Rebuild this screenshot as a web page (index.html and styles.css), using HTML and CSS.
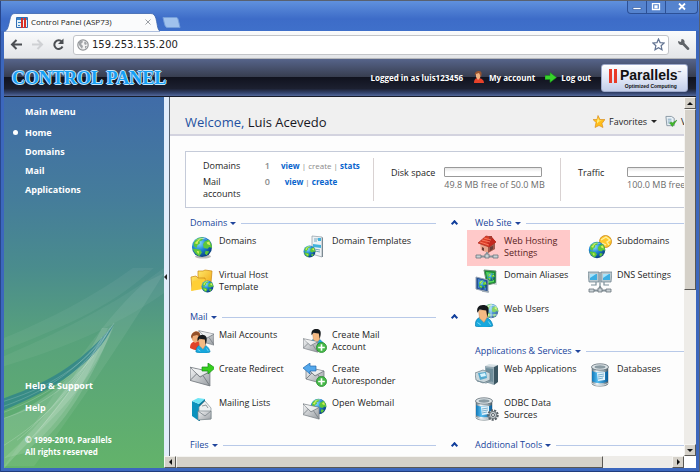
FILE: index.html
```html
<!DOCTYPE html>
<html lang="en">
<head>
<meta charset="utf-8">
<title>Control Panel (ASP73)</title>
<link rel="stylesheet" href="styles.css">
</head>
<body>
<svg class="sprite" aria-hidden="true">
  <defs>
    <radialGradient id="g-sea" cx=".35" cy=".3" r=".8"><stop offset="0" stop-color="#8fe0ff"/><stop offset=".45" stop-color="#1c86d6"/><stop offset="1" stop-color="#06306e"/></radialGradient>
    <linearGradient id="g-env" x1="0" y1="0" x2="1" y2="1"><stop offset="0" stop-color="#f4f5f6"/><stop offset="1" stop-color="#989da2"/></linearGradient>
    <linearGradient id="g-fold" x1="0" y1="0" x2="1" y2="1"><stop offset="0" stop-color="#ffe96a"/><stop offset="1" stop-color="#f0a412"/></linearGradient>
    <linearGradient id="g-can" x1="0" x2="1"><stop offset="0" stop-color="#61757f"/><stop offset=".3" stop-color="#f4f8fa"/><stop offset=".7" stop-color="#a9bac2"/><stop offset="1" stop-color="#45565f"/></linearGradient>
    <linearGradient id="g-blue" x1="0" x2="1"><stop offset="0" stop-color="#1077b8"/><stop offset=".35" stop-color="#56bdf0"/><stop offset="1" stop-color="#0a5e9c"/></linearGradient>
    <symbol id="globe" viewBox="0 0 24 24">
      <circle cx="12" cy="12" r="11" fill="url(#g-sea)"/>
      <path d="M3 7C6 2 11 1 14 2l-2 3-3 1 1 2-3 2-1 3-3-2zM15 6l4-2c3 3 4 6 4 9l-3-1-2 2-4-1-1-4zM5 14l5 1 2 3-3 4C5 20 3 17 2 14zM16 16l4 1-3 4-2-2z" fill="#5dc63a"/>
      <path d="M4 8l4-4 3-1-3 3-1 3zM17 7l3-1 1 4-3-1zM6 16l3 1-1 3z" fill="#d5ee5c"/>
      <path d="M5 5c3-3 9-4 13-1-4-1-9-1-13 1z" fill="#fff" opacity=".55"/>
    </symbol>
    <symbol id="env" viewBox="0 0 20 20">
      <path d="M1 2l18 4v13L1 14z" fill="url(#g-env)" stroke="#777d83" stroke-width=".8"/>
      <path d="M1 2l9 9 9-5M1 14l6-6M19 19l-6-9" fill="none" stroke="#777d83" stroke-width=".9"/>
      <path d="M2 3l8 7 8-4z" fill="#f8f9fa" opacity=".7"/>
    </symbol>
    <symbol id="plus" viewBox="0 0 10 10">
      <circle cx="5" cy="5" r="4.6" fill="#46b948" stroke="#23892b" stroke-width=".7"/><path d="M5 2v6M2 5h6" stroke="#fff" stroke-width="1.5"/>
    </symbol>
    <symbol id="man" viewBox="0 0 18 20">
      <path d="M1 19c0-5 2-8 7-8s8 3 9 8c-4 2-12 2-16 0z" fill="#18a8dd" stroke="#0879aa" stroke-width=".6"/>
      <path d="M4 5l1 7 4 4 3-5V4z" fill="#f5ba83" stroke="#b9794a" stroke-width=".4"/>
      <path d="M3 7C2 3 4 0 8 0s6 2 5 7l-1 4-1-6-6-1z" fill="#15191c"/>
      <path d="M3 16l3 2M13 15l2 3" stroke="#8fe2fa" stroke-width=".8"/>
    </symbol>
    <symbol id="can" viewBox="0 0 20 24">
      <path d="M2 4v17c2 3 14 3 16 0V4z" fill="url(#g-can)" stroke="#59666d" stroke-width=".5"/>
      <path d="M2 8c4 2 12 2 16 0v10c-4 3-12 3-16 0z" fill="url(#g-blue)"/>
      <path d="M7 10l8-1v8l-7 1z" fill="#e5f4fc"/><path d="M8 12l6-1M8 14l6-1M8 16l5-1" stroke="#4c92ba" stroke-width=".7"/>
      <ellipse cx="10" cy="4" rx="8.5" ry="3.2" fill="#dfe6e9" stroke="#637079" stroke-width=".8"/><ellipse cx="10" cy="4" rx="5.5" ry="1.7" fill="#8b9ba3"/>
      <path d="M2 20c3 3 13 3 16 0" fill="none" stroke="#d8dfe3"/>
    </symbol>
    <symbol id="net" viewBox="0 0 24 7">
      <path d="M3 4.500h18M12 0v4" stroke="#87949b" stroke-width="1.800"/><path d="M1 3h5v3H1zM18 3h5v3h-5zM10 2h4v4h-4z" fill="#c9d1d5" stroke="#6a757c" stroke-width=".8"/>
    </symbol>
    <symbol id="domains" viewBox="0 0 24 24"><ellipse cx="13" cy="21.500" rx="8" ry="2" fill="#b9b9b9"/><use href="#globe" x="1" y="1" width="22" height="22"/></symbol>
    <symbol id="dtemplates" viewBox="0 0 24 24">
      <path d="M9 1l10 1v20L9 19z" fill="#eef3f6" stroke="#8c9aa2" stroke-width=".7"/><path d="M19 2l1 1v19l-1 0z" fill="#7b8991"/>
      <path d="M11 4h6M11 6h3M11 14l6 1M12 16l5 1" stroke="#6c9fb8" stroke-width=".9"/><path d="M10 9l8 1v3l-8-1zM15 3h3v3h-3z" fill="#42b2dd"/>
      <use href="#globe" x="0" y="10" width="13" height="13"/>
    </symbol>
    <symbol id="vhost" viewBox="0 0 24 24">
      <path d="M8 2l5 0 2-1 7 1-1 12-13 3z" fill="url(#g-fold)" stroke="#c98510" stroke-width=".7"/>
      <path d="M1 8l5-1 2 2 7 0v9L2 21z" fill="url(#g-fold)" stroke="#c98510" stroke-width=".7"/><path d="M3 12l12-2-2 10-12 2z" fill="#ffcf35"/>
      <use href="#globe" x="11" y="11" width="13" height="13"/>
    </symbol>
    <symbol id="maccounts" viewBox="0 0 24 24">
      <use href="#env" x="8" y="-1" width="17" height="19"/>
      <path d="M0 19c0-5 3-7 7-7s5 3 5 8c-4 2-9 1-12-1z" fill="#e14228"/><path d="M2 5c3-4 7-3 8 0l-1 7-4 2-3-3z" fill="#f0ad77"/><path d="M1 8c0-5 7-8 9-3l0 3-3-2-4 1-1 3z" fill="#93502a"/>
      <use href="#man" x="5" y="6" width="16" height="18"/>
    </symbol>
    <symbol id="mcreate" viewBox="0 0 24 24"><use href="#man" x="6" y="0" width="16" height="18"/><use href="#env" x="-1" y="8" width="17" height="16"/><use href="#plus" x="13" y="13" width="11" height="11"/></symbol>
    <symbol id="redirect" viewBox="0 0 24 24"><use href="#env" x="-1" y="2" width="22" height="22"/><path d="M12 4h6V0l7 5-7 6V8h-6z" fill="#36cf1e" stroke="#168c15" stroke-width=".7"/></symbol>
    <symbol id="autoresp" viewBox="0 0 24 24"><use href="#env" x="1" y="2" width="22" height="20"/><path d="M13 3H7V0L0 5l7 6V8h6z" fill="#54a8ec" stroke="#2369ad" stroke-width=".7"/><use href="#plus" x="13" y="13" width="11" height="11"/></symbol>
    <symbol id="lists" viewBox="0 0 24 24">
      <path d="M2 4l7 3v17l-7-5z" fill="#0c92bd"/><path d="M2 4l6-3 7 1-6 5z" fill="#6fe5f5"/><path d="M9 7l6-5v4l-5 5v13H9z" fill="#087a9f"/>
      <path d="M9 10l6-6 6 7v11l-12 0z" fill="#edf0f1" stroke="#859095" stroke-width=".7"/><path d="M8 14l13 0v8l-13 1z" fill="url(#g-env)" stroke="#7a858a" stroke-width=".7"/><path d="M8 14l7 5 6-5M12 9l4-1 2 3" fill="none" stroke="#788388" stroke-width=".8"/>
    </symbol>
    <symbol id="webmail" viewBox="0 0 24 24"><use href="#globe" x="7" y="1" width="17" height="17"/><use href="#env" x="-1" y="4" width="18" height="20"/></symbol>
    <symbol id="hosting" viewBox="0 0 24 24">
      <path d="M5 8l1 7 7 3 7-4V7l-6-2z" fill="#e8a58c"/><path d="M13 11l7-4v7l-7 4z" fill="#a25a4d"/>
      <path d="M3 8l8-7 5 1 5 5-7 5z" fill="#dc3e28" stroke="#a92a20" stroke-width=".7"/><path d="M14 12l7-5-4-5-5 4z" fill="#c3281f"/><path d="M5 7l9 3M7 5l8 2M9 3l7 2" stroke="#ff8469" stroke-width=".8"/>
      <path d="M7 12l2 1v3l-2-1zM15 12l3-1v3l-3 2z" fill="#6c3d38"/><path d="M14 1h3v3h-3z" fill="#a83a30"/><use href="#net" x="0" y="17" width="24" height="7"/>
    </symbol>
    <symbol id="subdomains" viewBox="0 0 24 24">
      <circle cx="17.500" cy="6.500" r="6" fill="#ffc82d" stroke="#c98414" stroke-width=".8"/><path d="M13 5l5-3 4 3-3 2 2 3M14 8l4 2" fill="none" stroke="#fff2a0" stroke-width="1.300"/>
      <use href="#globe" x="0" y="6" width="18" height="18"/>
    </symbol>
    <symbol id="aliases" viewBox="0 0 24 24">
      <path d="M9 1l12 1v12l-9 2z" fill="#178a32" stroke="#6a8c77"/><path d="M11 3l8 1v9l-6 1z" fill="#57d55d"/><use href="#globe" x="12" y="4" width="8" height="8"/>
      <path d="M21 2l1 1v13l-4 0 3-2z" fill="#d3dadd"/>
      <path d="M1 8l12 3v12L1 20z" fill="#245092" stroke="#94a1b3"/><path d="M3 10l8 2v9l-8-2z" fill="#4386cd"/><use href="#globe" x="3" y="11" width="9" height="9"/><path d="M7 22l7 1" stroke="#9ca8b3" stroke-width="1.500"/>
    </symbol>
    <symbol id="dns" viewBox="0 0 24 24">
      <path d="M0 3l11 0v10H1zM13 3h11l-1 10H13z" fill="#bbc8ce" stroke="#687c87" stroke-width=".7"/><path d="M2 5h7v6H2zM15 5h7v6h-7z" fill="#3daee2"/><path d="M2 5h6L2 9zM15 5h6l-6 4z" fill="#a6e4fb"/><path d="M8 13v3h-5M16 13v3h5M12 3v16" fill="none" stroke="#7d9099" stroke-width="1.200"/><use href="#net" x="0" y="17" width="24" height="7"/>
    </symbol>
    <symbol id="users" viewBox="0 0 24 24"><g opacity=".75"><use href="#globe" x="8" y="0" width="16" height="16"/></g><path d="M10 7a8 8 0 0 1 13-2M10 12h13M16 1v15" fill="none" stroke="#d7f0fb" stroke-width=".7"/><use href="#man" x="-1" y="2" width="20" height="22"/></symbol>
    <symbol id="webapps" viewBox="0 0 24 24">
      <path d="M10 3l4-2 9 1-4 2z" fill="#d7e1e5"/><path d="M10 3l9 1v18l-9-3z" fill="#95aab4"/><path d="M19 4l4-2v17l-4 3z" fill="#3b5662"/><path d="M11 5l7 1v13l-7-2z" fill="#6f8e9b"/>
      <path d="M0 10l8-3 7 3v7l-7 3-7-3z" fill="#cbd8dd" stroke="#657982" stroke-width=".7"/><path d="M3 10l8-1 1 6-7 2z" fill="#54a9ce"/><path d="M5 11l5-1 1 3-5 1z" fill="#d6f4ff"/><path d="M2 18l9 2 5-2" stroke="#78909b" fill="none"/>
    </symbol>
    <symbol id="databases" viewBox="0 0 24 24"><use href="#can" x="2" y="0" width="20" height="24"/></symbol>
    <symbol id="odbc" viewBox="0 0 24 24"><use href="#can" x="-1" y="0" width="20" height="24"/><circle cx="18" cy="18" r="4.500" fill="#dce0e2" stroke="#596167" stroke-width="2.500" stroke-dasharray="2 1.100"/><circle cx="18" cy="18" r="3.600" fill="#c6cdd1" stroke="#707a80"/><circle cx="18" cy="18" r="1.500" fill="#fff" stroke="#59636a"/></symbol>
  </defs>
</svg>

<div class="window">
  <header class="titlebar">
    <div class="tab">
      <svg class="tab-shape" viewBox="0 0 154 19" preserveAspectRatio="none" aria-hidden="true"><path d="M0 19C4 17 4 14 6 6 7 2 8 .5 11 .5h134c3 0 4 2 5 5 2 8 1 11 5 13.500z" fill="#fafbfc" stroke="#3a65ae" stroke-width=".8"/></svg>
      <svg class="favicon" viewBox="0 0 12 11" aria-hidden="true"><path d="M.5.5h11v10H.5z" fill="#e5f2fa" stroke="#316db5"/><path d="M1 1h10v2H1zM2 5h3v1H2zM2 8h2v1H2z" fill="#3882c5"/><path d="M5 1h2v10H5zM8 1h2v10H8z" fill="#d93028"/></svg>
      <span class="tab-title">Control Panel (ASP73)</span>
      <button class="tab-close" aria-label="Close tab"><svg viewBox="0 0 6 6"><path d="M.5.5l5 5M5.500.5l-5 5" stroke="#9b9fa5"/></svg></button>
    </div>
    <button class="new-tab" aria-label="New tab"><svg viewBox="0 0 19 11"><path d="M1 .5h13c2 0 2 1 4 10H6C3 10.500 3 9 1 .5z" fill="#a0c2ed" stroke="#769fda"/></svg></button>
    <div class="win-controls">
      <button aria-label="Minimize"><svg viewBox="0 0 10 8"><path d="M1 4.500h8v2H1z" fill="#fff" stroke="#29539c" stroke-width=".6"/></svg></button>
      <button aria-label="Maximize"><svg viewBox="0 0 10 8"><path d="M1.500.5h7v6h-7zM4 3h2v1.500H4z" fill="none" stroke="#fff" stroke-width="1.300"/></svg></button>
      <button class="win-close" aria-label="Close"><svg viewBox="0 0 10 8"><path d="M2 .5l6 6M8 .5l-6 6" stroke="#fff" stroke-width="1.800"/></svg></button>
    </div>
  </header>

  <div class="toolbar">
    <button aria-label="Back"><svg viewBox="0 0 13 12"><path d="M12 6H2M6.500 1.500L2 6l4.500 4.500" fill="none" stroke="#4b4e52" stroke-width="2"/></svg></button>
    <button aria-label="Forward"><svg viewBox="0 0 13 12"><path d="M1 6h10M6.500 1.500L11 6l-4.500 4.500" fill="none" stroke="#cfd1d4" stroke-width="2"/></svg></button>
    <button aria-label="Reload"><svg viewBox="0 0 13 12"><path d="M10 3.500A4.300 4.300 0 1 0 10.500 8" fill="none" stroke="#4b4e52" stroke-width="2"/><path d="M11.500 0v5.500H6z" fill="#4b4e52"/></svg></button>
    <div class="address">
      <svg class="site-icon" viewBox="0 0 12 12" aria-hidden="true"><circle cx="6" cy="6" r="5.200" fill="#f3f3f3" stroke="#919497" stroke-width="1.200"/><path d="M2 3l3-2 1 2-2 2 2 2-1 3-3-4zM8 2l2 3-2 1-1-2zM8 7l2 0-2 3z" fill="#a1a4a7"/></svg>
      <input type="text" aria-label="Address" value="159.253.135.200">
      <svg class="star" viewBox="0 0 13 13" aria-hidden="true"><path d="M6.500 1l1.600 3.600 4 .4-3 2.700.9 4-3.500-2L3 11.700l.9-4L1 5l4-.4z" fill="#fff" stroke="#637492" stroke-width="1.200"/></svg>
    </div>
    <button aria-label="Settings"><svg viewBox="0 0 13 13"><path d="M1 3l3 1 .5-3C7 1 8 3 7.500 5l4.700 5c.6 1.500-.9 2.500-2 1.700L5.500 7C3 7.500 1 6 1 3z" fill="#5f6368"/></svg></button>
  </div>

  <div class="banner">
    <div class="brand">CONTROL PANEL</div>
    <span class="login">Logged in as luis123456</span>
    <a class="account" href="#account"><svg viewBox="0 0 12 13" aria-hidden="true"><path d="M1 12c0-4 2-5 4-5s6 1 6 5z" fill="#e8422a"/><path d="M3 2c2-2 5-1 5 1L7 7 5 9 3 6z" fill="#f2b282"/><path d="M2 5C1 1 4 0 6 0c3 0 3 3 2 6L6 2 3 3z" fill="#98542f"/></svg>My account</a>
    <a class="logout" href="#logout"><svg viewBox="0 0 12 12" aria-hidden="true"><path d="M0 4h5V1l6.500 5L5 11V8H0z" fill="#38d42c" stroke="#159218" stroke-width=".6"/></svg>Log out</a>
    <div class="vendor">
      <svg viewBox="0 0 10 16" aria-hidden="true"><path d="M1 1l3 0v14l-3 0zM6 1l3 0v14l-3 0z" fill="#e83a28"/></svg>
      <div class="vendor-text"><b>Parallels<sup>™</sup></b><span>Optimized Computing</span></div>
    </div>
  </div>

  <div class="workspace">
    <nav class="sidebar">
      <svg class="swoosh" viewBox="0 0 160 200" preserveAspectRatio="none" aria-hidden="true">
        <g fill="#fff"><path d="M0 70C60 45 115 15 160-25V-10C110 40 60 58 0 82z" opacity=".05"/><path d="M0 88C70 58 120 30 160 0V25C110 60 60 80 0 98z" opacity=".05"/><path d="M160 5C120 70 80 130 30 198H0C50 130 90 60 140 15z" opacity=".07"/><path d="M0 150C40 135 75 105 110 58 80 130 45 150 0 200z" opacity=".14"/><path d="M0 190C40 155 75 105 98 60l6 0C80 125 50 160 20 185z" opacity=".12"/><path d="M28 170C60 130 85 100 110 55 98 90 70 145 40 172z" opacity=".14"/></g>
        <path d="M0 130C50 113 82 90 110 56 91 97 48 122 0 142z" fill="#287f8d" opacity=".7"/>
        <g fill="none" stroke="#fff" stroke-width=".8" opacity=".22"><path d="M0 133C55 116 87 90 108 58M0 138C48 121 80 96 106 60M0 144C42 128 76 106 102 67M0 150C32 140 65 120 90 87M0 177C43 150 73 118 98 69M13 172C52 141 85 93 110 55M28 169C60 134 84 98 104 64"/></g>
      </svg>
      <h2>Main Menu</h2>
      <ul class="menu">
        <li class="current"><a href="#home">Home</a></li>
        <li><a href="#domains-page">Domains</a></li>
        <li><a href="#mail-page">Mail</a></li>
        <li><a href="#applications">Applications</a></li>
      </ul>
      <div class="support">
        <h2>Help &amp; Support</h2>
        <a href="#help">Help</a>
        <p>© 1999-2010, Parallels<br>All rights reserved</p>
      </div>
    </nav>
    <div class="pane">
      <button class="splitter" aria-label="Collapse sidebar"></button>
      <main class="content">
        <div class="welcome">
          <h1><span>Welcome,</span> Luis Acevedo</h1>
          <button class="favorites"><svg viewBox="0 0 12 12" aria-hidden="true"><path d="M5 0l2 4 5 0-3 4 1 4-4-2-4 2 1-5-3-3 4 0z" fill="#ffbe1c" stroke="#d78613" stroke-width=".6"/><path d="M5 2l1 3 3 0-3 1-2 2 0-2z" fill="#fff080"/></svg>Favorites<i class="down"></i></button>
          <button class="views"><svg viewBox="0 0 13 13" aria-hidden="true"><path d="M1 1l6 0 3 2v8l-8 0z" fill="#eaf2f7" stroke="#8796a2"/><path d="M3 4h4M3 6h4M3 8h3" stroke="#7fa4be"/><path d="M5 8l3 4 5-7-5 3-1-1z" fill="#41b928" stroke="#23841a" stroke-width=".5"/></svg>V</button>
        </div>
        <section class="summary">
          <table>
            <tr><th scope="row">Domains</th><td class="count">1</td><td class="links"><a href="#view">view</a> | <span>create</span> | <a href="#stats">stats</a></td></tr>
            <tr><th scope="row">Mail accounts</th><td class="count">0</td><td class="links"><a href="#mail-view">view</a> | <a href="#mail-create">create</a></td></tr>
          </table>
          <div class="usage"><span class="usage-name">Disk space</span><div class="usage-value"><div class="meter"></div>49.8 MB free of 50.0 MB</div></div>
          <div class="usage"><span class="usage-name">Traffic</span><div class="usage-value"><div class="meter"></div>100.0 MB free</div></div>
        </section>
        <div class="columns">
          <div class="column">
            <section class="group">
              <h3><button>Domains<i class="down"></i></button><span class="rule"></span><i class="up"></i></h3>
              <ul class="tools">
                <li><a href="#t1"><svg><use href="#domains"/></svg><span>Domains</span></a></li>
                <li><a href="#t2"><svg><use href="#dtemplates"/></svg><span>Domain Templates</span></a></li>
                <li><a href="#t3"><svg><use href="#vhost"/></svg><span>Virtual Host<br>Template</span></a></li>
              </ul>
            </section>
            <section class="group">
              <h3><button>Mail<i class="down"></i></button><span class="rule"></span><i class="up"></i></h3>
              <ul class="tools">
                <li><a href="#t4"><svg><use href="#maccounts"/></svg><span>Mail Accounts</span></a></li>
                <li><a href="#t5"><svg><use href="#mcreate"/></svg><span>Create Mail<br>Account</span></a></li>
                <li><a href="#t6"><svg><use href="#redirect"/></svg><span>Create Redirect</span></a></li>
                <li><a href="#t7"><svg><use href="#autoresp"/></svg><span>Create<br>Autoresponder</span></a></li>
                <li><a href="#t8"><svg><use href="#lists"/></svg><span>Mailing Lists</span></a></li>
                <li><a href="#t9"><svg><use href="#webmail"/></svg><span>Open Webmail</span></a></li>
              </ul>
            </section>
            <section class="group"><h3><button>Files<i class="down"></i></button><span class="rule"></span><i class="up"></i></h3></section>
          </div>
          <div class="column">
            <section class="group">
              <h3><button>Web Site<i class="down"></i></button><span class="rule"></span><i class="up"></i></h3>
              <ul class="tools">
                <li class="marked"><a href="#t10"><svg><use href="#hosting"/></svg><span>Web Hosting<br>Settings</span></a></li>
                <li><a href="#t11"><svg><use href="#subdomains"/></svg><span>Subdomains</span></a></li>
                <li><a href="#t12"><svg><use href="#aliases"/></svg><span>Domain Aliases</span></a></li>
                <li><a href="#t13"><svg><use href="#dns"/></svg><span>DNS Settings</span></a></li>
                <li><a href="#t14"><svg><use href="#users"/></svg><span>Web Users</span></a></li>
              </ul>
            </section>
            <section class="group">
              <h3><button>Applications &amp; Services<i class="down"></i></button><span class="rule"></span><i class="up"></i></h3>
              <ul class="tools">
                <li><a href="#t15"><svg><use href="#webapps"/></svg><span>Web Applications</span></a></li>
                <li><a href="#t16"><svg><use href="#databases"/></svg><span>Databases</span></a></li>
                <li><a href="#t17"><svg><use href="#odbc"/></svg><span>ODBC Data<br>Sources</span></a></li>
              </ul>
            </section>
            <section class="group"><h3><button>Additional Tools<i class="down"></i></button><span class="rule"></span><i class="up"></i></h3></section>
          </div>
        </div>
      </main>
      <div class="scroll vertical"><button class="arrow-up" aria-label="Scroll up"></button><div class="track"><div class="thumb"></div></div><button class="arrow-down" aria-label="Scroll down"></button></div>
      <div class="scroll horizontal"><button class="arrow-left" aria-label="Scroll left"></button><div class="track"><div class="thumb"></div></div><button class="arrow-right" aria-label="Scroll right"></button></div>
    </div>
  </div>
</div>
</body>
</html>
```
FILE: styles.css
```css
* { box-sizing: border-box; }
body { margin: 0; font: 500 9px/12px "Open Sans", "Noto Sans", sans-serif; color: #252525; }
h1, h2, h3, ul, p { margin: 0; padding: 0; font-size: inherit; font-weight: inherit; }
ul { list-style: none; }
a { color: inherit; text-decoration: none; }
button { border: 0; padding: 0; background: none; color: inherit; font: inherit; display: flex; align-items: center; }
.sprite { position: absolute; width: 0; height: 0; }

.window { display: flex; flex-direction: column; height: 100vh; padding: 0 3px 4px 4px; background: #3c67bd; border: solid #59616f; border-width: 1px 1px 0 0; box-shadow: inset 1px 0 #27468c, inset 0 -1px #203c7d; overflow: hidden; }
.titlebar { display: flex; align-items: flex-end; flex: 0 0 30px; margin: 0 -3px; padding-left: 3px; background: linear-gradient(#6091dd, #3d6cc8 60%, #3f70ca); position: relative; }
.tab { position: relative; display: flex; align-items: center; width: 156px; height: 18px; padding: 0 9px 0 12px; gap: 3px; color: #222; }
.tab-shape { position: absolute; inset: 0; width: 100%; height: 19px; }
.favicon { position: relative; width: 12px; height: 11px; }
.tab-title { position: relative; flex: 1; font-size: 8px; white-space: nowrap; }
.tab-close { position: relative; }
.tab-close svg { width: 6px; height: 6px; display: block; }
.new-tab { align-self: center; margin: 12px 0 0 2px; }
.new-tab svg { width: 19px; height: 11px; display: block; }
.win-controls { display: flex; align-self: flex-start; margin: 0 1px 0 auto; border: 1px solid #2c5096; border-top: 0; border-radius: 0 0 4px 4px; background: #5583ce; }
.win-controls button { width: 19px; height: 12px; justify-content: center; border-right: 1px solid #2c5096; }
.win-controls .win-close { width: 31px; border-right: 0; }
.win-controls svg { width: 10px; height: 8px; }

.toolbar { display: flex; align-items: center; flex: 0 0 28px; padding: 0 6px; gap: 8px; background: linear-gradient(#fafbfc, #e3e5e8); border-bottom: 1px solid #b6b8bb; }
.toolbar > button svg { width: 13px; height: 13px; display: block; }
.address { flex: 1; display: flex; align-items: center; gap: 3px; height: 20px; padding: 0 3px; background: #fff; border: 1px solid #c2c4c8; border-radius: 3px; }
.address input { flex: 1; min-width: 0; border: 0; padding: 0; background: none; font: 10px/16px "DejaVu Sans", sans-serif; color: #222; outline: 0; }
.site-icon { width: 12px; height: 12px; }
.star { width: 13px; height: 13px; }

.banner { display: flex; align-items: center; flex: 0 0 38px; padding: 0 8px; background: linear-gradient(#56648a, #383e50 48%, #11131f 50%, #1c2030 80%, #34456f 92%, #53689a); border-bottom: 1px solid #171c2a; color: #fff; font-weight: 700; font-size: 8px; white-space: nowrap; }
.brand { flex: 1; font: bold 18px/20px "Liberation Serif", serif; color: #16a0f5; text-shadow: 1px 0 #c4e6fc, -1px 0 #c4e6fc, 0 1px #c4e6fc, 0 -1px #c4e6fc; }
.account, .logout { display: flex; align-items: center; gap: 4px; margin-left: 10px; }
.account svg, .logout svg { width: 12px; height: 13px; }
.vendor { display: flex; align-items: flex-start; gap: 2px; width: 87px; height: 28px; margin-left: 10px; padding: 3px 6px; border: 1px solid #9da9ca; border-radius: 3px; background: linear-gradient(#fff, #dce3f4 60%, #c3cee9); color: #111; }
.vendor svg { width: 10px; height: 16px; flex: none; }
.vendor-text { display: flex; flex-direction: column; align-items: center; }
.vendor-text b { font: bold 14px/15px "Liberation Sans", sans-serif; }
.vendor-text sup { font-size: 4px; vertical-align: 6px; line-height: 0; }
.vendor-text span { font: bold 5px/6px "Liberation Sans", sans-serif; }

.workspace { display: flex; flex: 1; min-height: 0; }
.sidebar { position: relative; display: flex; flex-direction: column; flex: 0 0 160px; padding: 9px 10px 10px 21px; background: linear-gradient(#406ca8, #457d9a 28%, #4a8c8d 46%, #58a27b 66%, #63b36a); color: #fff; font-weight: 700; }
.sidebar > * { position: relative; }
.sidebar > .swoosh { position: absolute; left: 0; bottom: 0; width: 100%; height: 54%; }
.menu { display: flex; flex-direction: column; gap: 7px; margin-top: 9px; }
.current::before { content: ""; position: absolute; left: -12px; margin-top: 3px; width: 5px; height: 5px; border-radius: 50%; background: #fff; }
.support { display: flex; flex-direction: column; gap: 10px; margin-top: auto; }
.support p { margin-top: 10px; font-size: 8px; }

.pane { flex: 1; min-width: 0; display: grid; grid-template: minmax(0, 1fr) 12px / 6px minmax(0, 1fr) 12px; background: #fff; }
.splitter { background: #e1edfb; border: solid #586472; border-width: 0 1px 0 0; }
.splitter::before { content: ""; border: 3px solid transparent; border-left: 0; border-right: 3px solid #222; }
.content { overflow: hidden; background: #fdfdfd; }
.welcome { display: flex; align-items: flex-end; height: 39px; padding: 0 0 6px 15px; background: #f0f0f0; border-bottom: 2px solid #d3d3df; white-space: nowrap; }
.welcome h1 { flex: 0 0 408px; font-size: 13px; line-height: 12px; font-weight: 400; color: #17171f; }
.welcome h1 span { color: #2450a0; }
.welcome button { gap: 4px; flex: none; }
.welcome svg { width: 12px; height: 13px; }
.favorites { width: 72px; }
.down { display: inline-block; border: 3px solid transparent; border-bottom: 0; border-top: 3px solid currentColor; }
.up { width: 5px; height: 5px; border: solid #123f9c; border-width: 2px 0 0 2px; transform: rotate(45deg); }
.summary { display: flex; align-items: stretch; width: 620px; height: 57px; margin: 15px 0 0 15px; padding: 6px 0 6px 15px; background: #fff; border: 1px solid #c5cbd9; white-space: nowrap; }
.summary table { width: 140px; margin-right: 32px; border-spacing: 0; align-self: flex-start; table-layout: fixed; }
.summary th { width: 52px; padding: 2px; text-align: left; font-weight: 500; white-space: normal; }
.summary td { padding: 2px 0; vertical-align: top; color: #8a8a8a; }
.summary .count { width: 17px; text-align: right; font-weight: 600; }
.summary .links { padding-left: 11px; text-align: center; font-size: 8px; }
.links a { color: #0864cd; font-weight: 700; }
.usage { display: flex; gap: 9px; width: 187px; padding: 9px 0 0 17px; border-left: 1px solid #d9d2d2; }
.usage-name { min-width: 40px; }
.usage-value { color: #6c6c6c; }
.meter { width: 98px; height: 10px; margin-bottom: 2px; border: 1px solid #999; border-radius: 1px; background: linear-gradient(#e5e5e5, #fff 50%); }
.columns { display: flex; gap: 18px; width: 620px; margin: 8px 0 0 20px; }
.column { flex: 0 0 267px; }
.group h3 { display: flex; align-items: center; height: 14px; color: #20459c; }
.group h3 button { gap: 3px; font-weight: 500; white-space: nowrap; }
.rule { flex: 1; height: 1px; margin: 0 16px 0 5px; background: #b8c9e8; }
.tools { display: grid; grid-template-columns: 113px 113px; grid-auto-rows: 34px; padding: 5px 0 7px; }
.tools a { display: flex; gap: 5px; white-space: nowrap; }
.tools svg { width: 24px; height: 24px; flex: none; }
.marked { margin: -5px 18px 3px -8px; padding: 5px 0 0 8px; background: #ffc9c9; color: #571c1c; }

.scroll { display: flex; background: #eeece8; }
.scroll button { flex: 0 0 12px; justify-content: center; }
.scroll button, .thumb { background: #d5d1c9; border: 1px solid; border-color: #f5f4f1 #5a5854 #5a5854 #f5f4f1; }
.vertical { flex-direction: column; grid-column: 3; }
.horizontal { grid-column: 1 / 3; }
.track { flex: 1; }
.vertical .thumb { height: 54%; }
.horizontal .thumb { width: 86%; height: 100%; }
.scroll button::before { content: ""; border: 3px solid transparent; }
.scroll .arrow-up::before { border-bottom-color: #111; border-top: 0; }
.scroll .arrow-down::before { border-top-color: #111; border-bottom: 0; }
.scroll .arrow-left::before { border-right-color: #111; border-left: 0; }
.scroll .arrow-right::before { border-left-color: #111; border-right: 0; }
```
